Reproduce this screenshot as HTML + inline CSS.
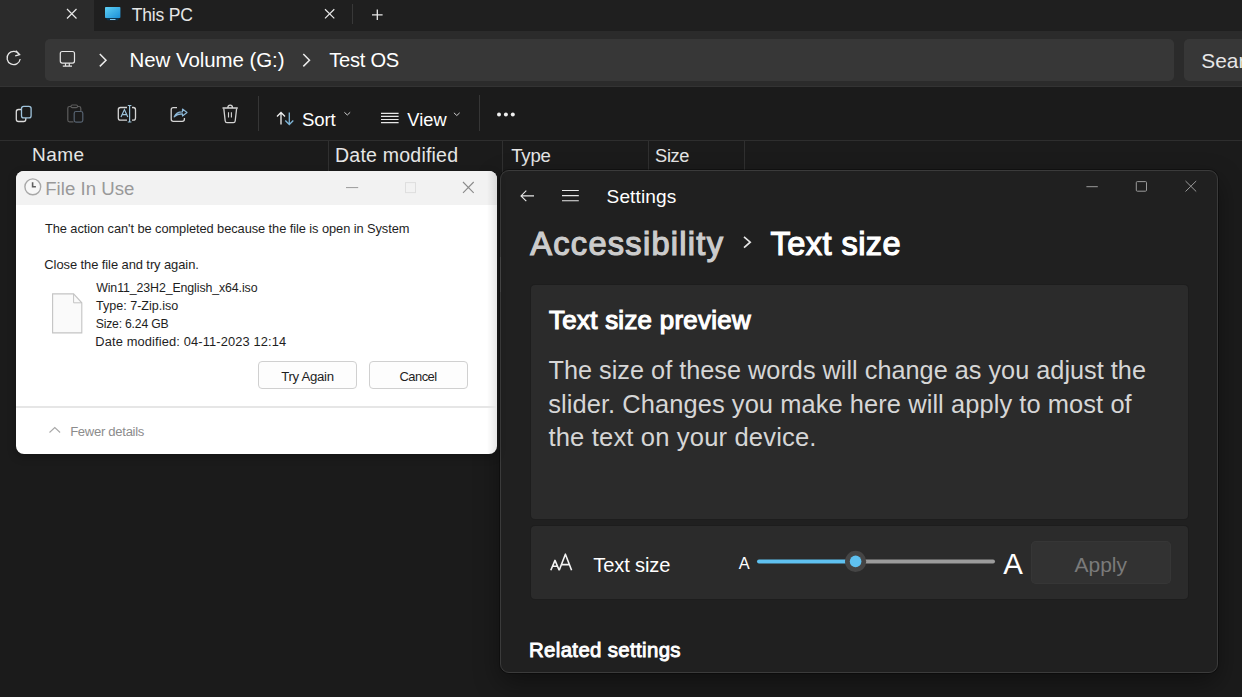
<!DOCTYPE html>
<html><head><meta charset="utf-8"><style>
html,body{margin:0;padding:0;}
body{width:1242px;height:697px;overflow:hidden;position:relative;background:#1b1b1b;font-family:"Liberation Sans",sans-serif;}
.b{position:absolute;box-sizing:content-box;}
.t{position:absolute;white-space:pre;line-height:normal;font-family:"Liberation Sans",sans-serif;}
.ov{position:absolute;left:0;top:0;}
</style></head><body>
<div class="b" style="left:0px;top:0px;width:1242px;height:31px;background:#1f1f1f;"></div>
<div class="b" style="left:-10px;top:0px;width:104px;height:31px;background:#2b2b2b;"></div>
<div class="b" style="left:0px;top:31px;width:1242px;height:56px;background:#2b2b2b;"></div>
<div class="b" style="left:45px;top:39px;width:1129px;height:42px;background:#373737;border-radius:5px;"></div>
<div class="b" style="left:1184px;top:39px;width:78px;height:42px;background:#373737;border-radius:5px;"></div>
<div class="b" style="left:0px;top:86px;width:1242px;height:1px;background:#333333;"></div>
<div class="b" style="left:0px;top:87px;width:1242px;height:610px;background:#1b1b1b;"></div>
<div class="b" style="left:0px;top:140px;width:1242px;height:1px;background:#2e2e2e;"></div>
<div class="b" style="left:328px;top:141px;width:1px;height:34px;background:#303030;"></div>
<div class="b" style="left:502px;top:141px;width:1px;height:34px;background:#303030;"></div>
<div class="b" style="left:648px;top:141px;width:1px;height:34px;background:#303030;"></div>
<div class="b" style="left:744px;top:141px;width:1px;height:34px;background:#303030;"></div>
<div class="b" style="left:258px;top:96px;width:1px;height:35px;background:#363636;"></div>
<div class="b" style="left:479px;top:95px;width:1px;height:36px;background:#363636;"></div>
<div class="b" style="left:352px;top:4px;width:1px;height:20px;background:#383838;"></div>
<svg class="ov" width="1242" height="697" viewBox="0 0 1242 697"><path d="M67 9 L76.5 18.5 M76.5 9 L67 18.5" stroke="#e8e8e8" stroke-width="1.2"/><path d="M325 9.2 L334.3 18.4 M334.3 9.2 L325 18.4" stroke="#e8e8e8" stroke-width="1.2"/><path d="M377.3 9.5 V20 M372 14.8 H382.6" stroke="#e8e8e8" stroke-width="1.3"/><defs><linearGradient id="mg" x1="0" y1="0" x2="1" y2="1"><stop offset="0" stop-color="#5fd0f5"/><stop offset="1" stop-color="#1a8fd8"/></linearGradient></defs><rect x="105" y="7" width="15.4" height="11" rx="0.8" fill="url(#mg)"/><path d="M106 18 H119.4 L118 20.3 H107.4 Z" fill="#0d3550"/><path d="M110 19.5 H115.5" stroke="#8fd8ff" stroke-width="0.9"/><path d="M19.3 54.5 A6.6 6.6 0 1 0 20.2 59" fill="none" stroke="#e6e6e6" stroke-width="1.3"/><path d="M15.8 50.6 L19.6 54.7 L15.2 55.9" fill="none" stroke="#e6e6e6" stroke-width="1.3"/><rect x="60.3" y="51.5" width="14.2" height="11.6" rx="2" fill="none" stroke="#e6e6e6" stroke-width="1.2"/><path d="M65.5 63.2 V66 M69.3 63.2 V66 M62.8 66.2 H72" stroke="#e6e6e6" stroke-width="1.2"/><path d="M99.8 54 L106 60.2 L99.8 66.4" fill="none" stroke="#ececec" stroke-width="1.5"/><path d="M303.3 54 L309.5 60.2 L303.3 66.4" fill="none" stroke="#ececec" stroke-width="1.5"/><rect x="16.3" y="109.5" width="9.5" height="12" rx="2.2" fill="none" stroke="#dcdcdc" stroke-width="1.3"/><rect x="21.5" y="106.3" width="9.6" height="11.6" rx="2.2" fill="#1b1b1b" stroke="#9fc3dc" stroke-width="1.3"/><path d="M71 106.5 H69.5 Q67.8 106.5 67.8 108.3 V120 Q67.8 121.8 69.5 121.8 H73.5" fill="none" stroke="#5c5c5c" stroke-width="1.2"/><path d="M77.5 106.5 H79 Q80.8 106.5 80.8 108.3 V111" fill="none" stroke="#5c5c5c" stroke-width="1.2"/><rect x="71" y="105" width="6.5" height="2.6" rx="1.2" fill="none" stroke="#5c5c5c" stroke-width="1.1"/><rect x="74.2" y="111.5" width="8.6" height="10.6" rx="1.8" fill="none" stroke="#566270" stroke-width="1.2"/><path d="M127 107.5 H120.5 Q118.3 107.5 118.3 109.7 V118 Q118.3 120.2 120.5 120.2 H127 M132 107.5 H133.3 Q135.5 107.5 135.5 109.7 V118 Q135.5 120.2 133.3 120.2 H132" fill="none" stroke="#d4d4d4" stroke-width="1.3"/><path d="M129.6 105.5 V122 M127.8 105.5 H131.4 M127.8 122 H131.4" stroke="#9cc4dc" stroke-width="1.2"/><path d="M121 117 L124.4 109.6 L127.8 117 M122.2 114.6 H126.6" fill="none" stroke="#9cc4dc" stroke-width="1.2"/><path d="M177 107.6 H173.3 Q171.2 107.6 171.2 109.7 V119.3 Q171.2 121.4 173.3 121.4 H182.3 Q184.4 121.4 184.4 119.3 V118" fill="none" stroke="#d4d4d4" stroke-width="1.3"/><path d="M174.2 116.8 Q176.5 111.6 182.5 111.8 V109 L187 112.5 L182.5 116 V113.8 Q177.5 113.6 174.2 116.8 Z" fill="none" stroke="#8cb8d8" stroke-width="1.2" stroke-linejoin="round"/><path d="M222.5 108 H237.8 M227.8 107.6 Q228 105.2 230.2 105.2 Q232.4 105.2 232.5 107.6" fill="none" stroke="#d4d4d4" stroke-width="1.3"/><path d="M223.8 108.5 L225.2 121 Q225.4 122.6 227 122.6 H233.4 Q235 122.6 235.2 121 L236.6 108.5" fill="none" stroke="#d4d4d4" stroke-width="1.3"/><path d="M228.5 112.2 V117.6 M231.4 112.2 V117.6" stroke="#d4d4d4" stroke-width="1.1"/><path d="M281 112.5 V124.5 M277 116.5 L281 112.5 L285 116.5" fill="none" stroke="#f0f0f0" stroke-width="1.3"/><path d="M289.3 112.5 V124.5 M285.3 120.5 L289.3 124.5 L293.3 120.5" fill="none" stroke="#7fb6d8" stroke-width="1.3"/><path d="M344.4 112.3 L347.3 115 L350.2 112.3" fill="none" stroke="#cfcfcf" stroke-width="1"/><path d="M381 113.3 H398.6 M381 116.4 H398.6 M381 119.5 H398.6 M381 122.6 H398.6" stroke="#e6e6e6" stroke-width="1.2"/><path d="M453.9 112.8 L456.8 115.5 L459.7 112.8" fill="none" stroke="#cfcfcf" stroke-width="1"/><circle cx="499" cy="114.6" r="2" fill="#f0f0f0"/><circle cx="505.9" cy="114.6" r="2" fill="#f0f0f0"/><circle cx="512.8" cy="114.6" r="2" fill="#f0f0f0"/></svg>
<div class="t" style="left:131.65px;top:5.49px;font-size:17.52px;letter-spacing:-0.192px;color:#e6e6e6;">This PC</div>
<div class="t" style="left:129.56px;top:48.26px;font-size:20.47px;letter-spacing:-0.052px;color:#ffffff;">New Volume (G:)</div>
<div class="t" style="left:329.30px;top:48.59px;font-size:20.12px;letter-spacing:-0.255px;color:#ffffff;">Test OS</div>
<div class="t" style="left:1201.36px;top:49.21px;font-size:20.86px;letter-spacing:0.000px;color:#e6e6e6;">Search</div>
<div class="t" style="left:302.07px;top:108.78px;font-size:18.61px;letter-spacing:-0.143px;color:#ffffff;">Sort</div>
<div class="t" style="left:407.22px;top:109.12px;font-size:18.25px;letter-spacing:0.079px;color:#ffffff;">View</div>
<div class="t" style="left:31.98px;top:144.22px;font-size:19.01px;letter-spacing:0.506px;color:#e6e6e6;">Name</div>
<div class="t" style="left:335.04px;top:143.92px;font-size:19.55px;letter-spacing:0.209px;color:#e6e6e6;">Date modified</div>
<div class="t" style="left:511.23px;top:144.52px;font-size:18.57px;letter-spacing:-0.198px;color:#e6e6e6;">Type</div>
<div class="t" style="left:655.09px;top:144.81px;font-size:18.26px;letter-spacing:-0.358px;color:#e6e6e6;">Size</div>
<div class="b" style="left:500px;top:170px;width:716px;height:501px;background:#202020;border:1px solid #3b3b3b;border-radius:9px;box-shadow:0 0 0 1px rgba(0,0,0,0.3),0 10px 26px rgba(0,0,0,0.4);"></div>
<div class="b" style="left:531px;top:285px;width:657px;height:234px;background:#2b2b2b;border-radius:4px;box-shadow:0 0 0 1px #1d1d1d;"></div>
<div class="b" style="left:531px;top:526px;width:657px;height:73px;background:#2b2b2b;border-radius:4px;box-shadow:0 0 0 1px #1d1d1d;"></div>
<div class="b" style="left:500px;top:257px;width:1px;height:35px;background:#474747;"></div>
<div class="b" style="left:1031px;top:541px;width:140px;height:43px;background:#323232;border-radius:5px;box-shadow:inset 0 0 0 1px #363636;"></div>
<svg class="ov" width="1242" height="697" viewBox="0 0 1242 697"><path d="M521 195.9 H534 M526.3 190.6 L521 195.9 L526.3 201.2" fill="none" stroke="#e8e8e8" stroke-width="1.1"/><path d="M562 190.5 H578.8 M562 195.6 H578.8 M562 200.7 H578.8" stroke="#e8e8e8" stroke-width="1.1"/><path d="M1086.4 186.7 H1097.8" stroke="#9a9a9a" stroke-width="1"/><rect x="1136.3" y="181.6" width="10.2" height="9.6" rx="1" fill="none" stroke="#9a9a9a" stroke-width="1"/><path d="M1185.5 181 L1196.2 191.5 M1196.2 181 L1185.5 191.5" stroke="#9a9a9a" stroke-width="1"/><path d="M744 236.8 L750.2 242.2 L744 247.6" fill="none" stroke="#e6e6e6" stroke-width="1.7"/><path d="M550.8 570.2 L555 560.4 L559.2 570.2 M552.6 566.2 H557.4" fill="none" stroke="#f4f4f4" stroke-width="1.6" stroke-linejoin="round"/><path d="M559.2 570.2 L565.4 554.2 L571.6 570.2 M561.6 564.6 H569.2" fill="none" stroke="#f4f4f4" stroke-width="1.6" stroke-linejoin="round"/><path d="M759 561.4 H850" stroke="#5fc1f0" stroke-width="4" stroke-linecap="round"/><path d="M861 561.4 H993" stroke="#9c9c9c" stroke-width="4" stroke-linecap="round"/><circle cx="855.6" cy="561.4" r="10.6" fill="#454545"/><circle cx="855.6" cy="561.4" r="5.8" fill="#5fc1f0"/></svg>
<div class="t" style="left:606.55px;top:185.94px;font-size:19.09px;letter-spacing:0.117px;color:#ffffff;">Settings</div>
<div class="t" style="left:530.30px;top:224.54px;font-size:32.60px;letter-spacing:1.271px;color:#cccccc;-webkit-text-stroke:1.2px #cccccc;">Accessibility</div>
<div class="t" style="left:770.55px;top:224.54px;font-size:32.60px;letter-spacing:0.418px;color:#ffffff;-webkit-text-stroke:1.2px #ffffff;">Text size</div>
<div class="t" style="left:549.08px;top:306.13px;font-size:25.80px;letter-spacing:0.314px;color:#ffffff;-webkit-text-stroke:1.2px #ffffff;">Text size preview</div>
<div class="t" style="left:548.49px;top:355.60px;font-size:25.29px;letter-spacing:0.004px;color:#d6d6d6;">The size of these words will change as you adjust the</div>
<div class="t" style="left:548.24px;top:389.76px;font-size:25.45px;letter-spacing:0.075px;color:#d6d6d6;">slider. Changes you make here will apply to most of</div>
<div class="t" style="left:548.49px;top:423.12px;font-size:25.60px;letter-spacing:0.143px;color:#d6d6d6;">the text on your device.</div>
<div class="t" style="left:593.30px;top:553.78px;font-size:20.13px;letter-spacing:-0.139px;color:#ffffff;">Text size</div>
<div class="t" style="left:738.80px;top:553.63px;font-size:16.40px;letter-spacing:0.000px;color:#ffffff;">A</div>
<div class="t" style="left:1003.20px;top:546.80px;font-size:29.41px;letter-spacing:0.000px;color:#ffffff;">A</div>
<div class="t" style="left:1074.60px;top:553.19px;font-size:20.98px;letter-spacing:-0.012px;color:#7a7a7a;">Apply</div>
<div class="t" style="left:529.02px;top:639.43px;font-size:20.40px;letter-spacing:0.352px;color:#ffffff;-webkit-text-stroke:0.9px #ffffff;">Related settings</div>
<div class="b" style="left:16px;top:171px;width:481px;height:283px;background:#ffffff;border-radius:8px;overflow:hidden;box-shadow:0 3px 8px rgba(0,0,0,0.25);">
<div class="b" style="left:0;top:0;width:481px;height:34px;background:#f2f2f2;"></div>
<div class="b" style="left:471px;top:0;width:10px;height:283px;background:linear-gradient(90deg,rgba(0,0,0,0),rgba(0,0,0,0.1));"></div>
<div class="b" style="left:0;top:235px;width:481px;height:2px;background:#e6e6e6;"></div>
</div>
<svg class="ov" width="1242" height="697" viewBox="0 0 1242 697"><circle cx="32.8" cy="186.8" r="7.9" fill="#f7f7f7" stroke="#a8a8a8" stroke-width="1.4"/><path d="M32.6 182.2 V186.7 H35.9" fill="none" stroke="#606060" stroke-width="1.6"/><path d="M346 187.6 H358.2" stroke="#9a9a9a" stroke-width="1"/><rect x="405.5" y="182.6" width="10" height="10" fill="none" stroke="#dedede" stroke-width="1"/><path d="M463 182 L473.7 192.8 M473.7 182 L463 192.8" stroke="#8a8a8a" stroke-width="1.1"/><path d="M52.6 293.9 H73.6 L81.8 302.8 V332.9 H52.6 Z" fill="#fafafa" stroke="#c4c4c4" stroke-width="1.1"/><path d="M73.6 293.9 V302.8 H81.8" fill="none" stroke="#c4c4c4" stroke-width="1"/><path d="M49.5 432.5 L54.8 427.6 L60.1 432.5" fill="none" stroke="#a8a8a8" stroke-width="1.1"/></svg>
<div class="b" style="left:258px;top:361px;width:97px;height:26px;background:#fdfdfd;border:1px solid #d0d0d0;border-radius:4px;"></div>
<div class="b" style="left:369px;top:361px;width:97px;height:26px;background:#fdfdfd;border:1px solid #d0d0d0;border-radius:4px;"></div>
<div class="t" style="left:45.21px;top:177.59px;font-size:18.61px;letter-spacing:0.017px;color:#999999;">File In Use</div>
<div class="t" style="left:44.94px;top:220.92px;font-size:12.84px;letter-spacing:-0.071px;color:#1e1e1e;">The action can't be completed because the file is open in System</div>
<div class="t" style="left:44.35px;top:256.72px;font-size:12.95px;letter-spacing:-0.081px;color:#1e1e1e;">Close the file and try again.</div>
<div class="t" style="left:96.18px;top:280.96px;font-size:12.37px;letter-spacing:-0.105px;color:#1e1e1e;">Win11_23H2_English_x64.iso</div>
<div class="t" style="left:96.05px;top:298.59px;font-size:12.55px;letter-spacing:-0.008px;color:#1e1e1e;">Type: 7-Zip.iso</div>
<div class="t" style="left:95.69px;top:316.53px;font-size:12.19px;letter-spacing:-0.189px;color:#1e1e1e;">Size: 6.24 GB</div>
<div class="t" style="left:95.27px;top:333.81px;font-size:12.85px;letter-spacing:0.138px;color:#1e1e1e;">Date modified: 04-11-2023 12:14</div>
<div class="t" style="left:281.14px;top:368.76px;font-size:13.23px;letter-spacing:-0.306px;color:#1e1e1e;">Try Again</div>
<div class="t" style="left:399.45px;top:369.02px;font-size:12.95px;letter-spacing:-0.509px;color:#1e1e1e;">Cancel</div>
<div class="t" style="left:70.15px;top:424.20px;font-size:13.08px;letter-spacing:-0.295px;color:#8c8c8c;">Fewer details</div>
</body></html>
